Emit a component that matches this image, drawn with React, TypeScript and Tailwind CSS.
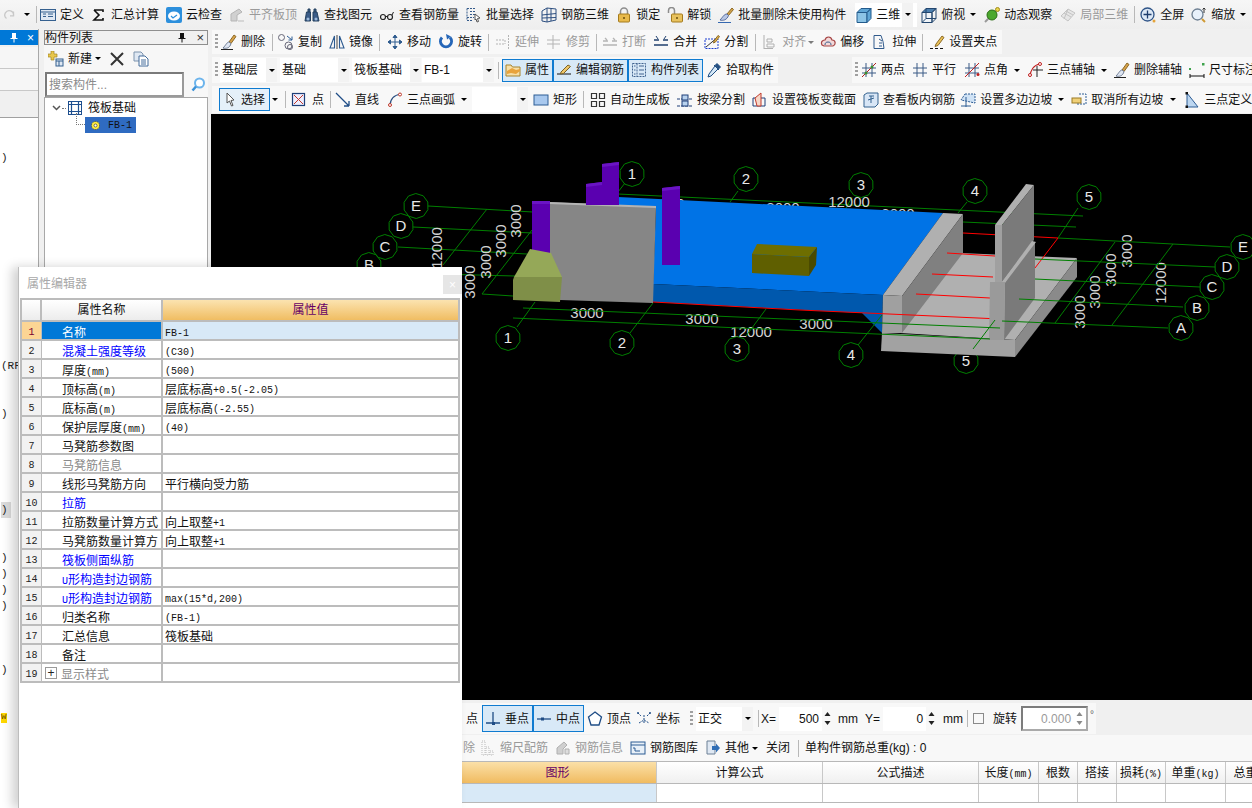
import React from "react";

const Ic = ({ children, size = 16 }: { children: React.ReactNode; size?: number }) => (
  <svg viewBox="0 0 16 16" width={size} height={size} className="shrink-0" fill="none">
    {children}
  </svg>
);

const Caret = ({ className = "" }: { className?: string }) => (
  <span className={`w-0 h-0 shrink-0 border-x-[3px] border-x-transparent border-t-[3px] border-t-black ${className}`} />
);

const Sep = ({ className = "" }: { className?: string }) => (
  <span className={`w-px h-[17px] shrink-0 bg-[#b8b8b8] ${className}`} />
);

const Grip = ({ className = "ml-[3px]" }: { className?: string }) => (
  <span className={`w-[3px] h-[16px] shrink-0 bg-[repeating-linear-gradient(to_bottom,#a0a0a0_0,#a0a0a0_2px,transparent_2px,transparent_4px)] ${className}`} />
);

function Tool({
  icon,
  label,
  muted,
  className = "",
}: {
  icon?: React.ReactNode;
  label: string;
  muted?: boolean;
  className?: string;
}) {
  return (
    <div className={`flex items-center shrink-0 gap-[4px] ${className}`}>
      {icon}
      <span className={muted ? "text-[#9a9a9a] whitespace-nowrap" : "text-[#111] whitespace-nowrap"}>{label}</span>
    </div>
  );
}

// toolbar icons
const icons = {
  define: (
    <Ic>
      <rect x="0.5" y="2.5" width="15" height="11" fill="#dfe8f3" stroke="#35608f" />
      <path d="M0.5 5h15M8 7h5M8 9.5h5M3 7h3M3 9.5h3" stroke="#35608f" />
    </Ic>
  ),
  sum: (
    <Ic>
      <path d="M3 3h9v2M3 3l5 5-5 5h9v-2" stroke="#111" strokeWidth="1.6" />
    </Ic>
  ),
  cloud: (
    <Ic>
      <rect width="16" height="16" rx="2" fill="#2c8fdc" />
      <ellipse cx="8" cy="9" rx="6" ry="4.5" fill="#fff" />
      <path d="M5 9l2 2 4-3" stroke="#2c8fdc" strokeWidth="1.2" />
    </Ic>
  ),
  flush: (
    <Ic>
      <path d="M2 14V7l8-5 3 3-5 3v6z" fill="#d0d0d0" stroke="#b5b5b5" />
      <path d="M9 14h6" stroke="#bbb" />
    </Ic>
  ),
  binoc: (
    <Ic>
      <path d="M1 14l1.500-9h4v9zM9 14V5h4l2 9zM4 5V2h2v3M10 5V2h2v3" fill="#3b5c88" stroke="#25415f" />
      <circle cx="4" cy="12" r="1.500" fill="#9db9da" />
      <circle cx="12" cy="12" r="1.500" fill="#9db9da" />
    </Ic>
  ),
  glasses: (
    <Ic>
      <circle cx="4" cy="10" r="2.500" stroke="#222" strokeWidth="1.200" />
      <circle cx="11" cy="10" r="2.500" stroke="#222" strokeWidth="1.200" />
      <path d="M6.500 9.500h2M13 8l1.500-3" stroke="#222" />
    </Ic>
  ),
  batch: (
    <Ic>
      <path d="M1 1.500h8M1 1.500v12M4 4.500h6M4 7.500h5M1 10.500h7M1 13.500h6" stroke="#355b8b" strokeDasharray="2 1" />
      <path d="M9 7l5 4-2.500 .5 1 3-1.500 .5-1-3L9 13z" fill="#fff" stroke="#555" />
    </Ic>
  ),
  rebar3d: (
    <Ic>
      <path d="M1 4l5-3v14l-5-1zM6 1l9 1v11l-9 2M1 8l14-1.500M10 1.500v12.500M1 11l14-.5" stroke="#2d4f80" />
    </Ic>
  ),
  lock: (
    <Ic>
      <path d="M4.500 7V4.500a3.500 3.500 0 017 0V7" stroke="#8d8d8d" strokeWidth="1.500" />
      <rect x="2.500" y="7" width="11" height="8" rx="1" fill="#e8b94a" stroke="#a47a1c" />
      <circle cx="8" cy="11" r="1" fill="#6b4e0c" />
    </Ic>
  ),
  unlock: (
    <Ic>
      <path d="M1.500 6V3.500a3 3 0 016 0V7" stroke="#8d8d8d" strokeWidth="1.500" />
      <rect x="4.500" y="7" width="11" height="8" rx="1" fill="#e8c25e" stroke="#a47a1c" />
      <circle cx="10" cy="11" r="1" fill="#6b4e0c" />
    </Ic>
  ),
  brush: (
    <Ic>
      <path d="M9 7l5-6 1.500 1.500-5 6z" fill="#d6a44a" stroke="#8c6a28" />
      <path d="M9 7c-3 0-4 3-7 6 3 1 7 0 8.500-4.500z" fill="#b8c6e4" stroke="#5a6fa0" />
      <path d="M0 15.500h13" stroke="#3568b0" />
    </Ic>
  ),
  cube: (
    <Ic>
      <path d="M1 5.500h10v10H1z" fill="#8cc4e6" stroke="#235b8c" />
      <path d="M1 5.500L5 1.500h10L11 5.500zM11 5.500l4-4v10l-4 4z" fill="#5fa6d6" stroke="#235b8c" />
    </Ic>
  ),
  top: (
    <Ic>
      <path d="M1 5.500L5 1.500h10L11 5.500H1z" fill="#4c7fae" stroke="#23466e" />
      <path d="M1 5.500h10v10H1z" fill="#f0f4f8" stroke="#23466e" />
      <path d="M11 5.500l4-4v10l-4 4zM1 15.500l4-4h10M5 1.500v10" stroke="#23466e" />
    </Ic>
  ),
  orbit: (
    <Ic>
      <path d="M1 15L13 3" stroke="#999" strokeWidth="2" />
      <circle cx="8" cy="8" r="5" fill="#4ca82e" stroke="#2a6d14" />
      <circle cx="13.500" cy="2.500" r="2" fill="#e8d44a" stroke="#a08c1c" />
    </Ic>
  ),
  local3d: (
    <Ic>
      <path d="M1 9l7-7 7 4-7 8z" fill="#e6e6e6" stroke="#c4c4c4" />
      <path d="M4 6l7 4M6 4l7 4M8 2L4 12" stroke="#c4c4c4" />
    </Ic>
  ),
  full: (
    <Ic>
      <circle cx="7.500" cy="7.500" r="6.500" fill="#dce8f6" stroke="#2f5487" strokeWidth="1.300" />
      <path d="M7.500 3.500v8M3.500 7.500h8" stroke="#1e3d6e" strokeWidth="1.300" />
      <circle cx="14" cy="14" r="1.500" fill="#e5a43a" />
    </Ic>
  ),
  zoom: (
    <Ic>
      <circle cx="6.500" cy="7.500" r="5.500" fill="#e8f1fb" stroke="#6d7f92" strokeWidth="1.300" />
      <path d="M11 12l3 3" stroke="#d09a34" strokeWidth="2" />
      <path d="M13 1v5M11.500 2.500L13 1l1.500 1.500" stroke="#333" />
    </Ic>
  ),
  del: (
    <Ic>
      <path d="M8 8l5-7 2 1.500-5 7z" fill="#d8a24a" stroke="#8c6a28" />
      <path d="M8 8c-2 0-3 3-6 6 3 1 7 0 8-4.500z" fill="#dfe6f2" stroke="#6f7d95" />
      <path d="M0 15.500h12" stroke="#222" />
    </Ic>
  ),
  copy: (
    <Ic>
      <circle cx="3.500" cy="3.500" r="3" stroke="#667" />
      <circle cx="10.500" cy="11.500" r="3.500" stroke="#667" />
      <circle cx="12" cy="13" r="2.500" stroke="#667" />
      <path d="M9 2l5 4M14 2.500V6h-3.500" stroke="#2d5c94" />
    </Ic>
  ),
  mirror: (
    <Ic>
      <path d="M5.500 2L1 14h4.500zM10.500 2L15 14h-4.500z" stroke="#2e5b90" strokeWidth="1.100" />
      <path d="M8 1v14" stroke="#444" />
    </Ic>
  ),
  move: (
    <Ic>
      <path d="M8 1v14M1 8h14M8 1L6 3.500h4zM8 15l-2-2.500h4zM1 8l2.500-2v4zM15 8l-2.500-2v4z" stroke="#2f5c8f" fill="#2f5c8f" />
    </Ic>
  ),
  rotate: (
    <Ic>
      <path d="M4 3.500a5.500 5.500 0 108 0" stroke="#2566b8" strokeWidth="3" />
      <path d="M8 0l5 2.500-4 3z" fill="#2566b8" />
    </Ic>
  ),
  extend: (
    <Ic>
      <path d="M13.500 1v14M1 6h9M1 10h9M10 6v4" stroke="#b4b4b4" strokeDasharray="2 1" />
    </Ic>
  ),
  trim: (
    <Ic>
      <path d="M7 1v14M1 6h13M1 10h13" stroke="#b4b4b4" />
    </Ic>
  ),
  breakI: (
    <Ic>
      <path d="M1 7h5M10 7h5M1 11h14M3 4l2 2M11 4l2 2" stroke="#b4b4b4" strokeWidth="1.300" />
    </Ic>
  ),
  merge: (
    <Ic>
      <path d="M1 6h5M10 6h5M1 11h14" stroke="#1f3f6e" strokeWidth="1.400" />
      <path d="M3 2l2 3M13 2l-2 3" stroke="#1f3f6e" />
    </Ic>
  ),
  split: (
    <Ic>
      <path d="M1 5h13v9.500H1z" stroke="#1c3ed0" strokeDasharray="2 1" />
      <path d="M2 13L14 3" stroke="#333" />
      <path d="M10 7l4-5.500 1.500 1-4 5.500-2 1z" fill="#e8b74a" stroke="#8c6a28" />
    </Ic>
  ),
  align: (
    <Ic>
      <path d="M2 1v14M2 14.500h9M5 5h5v3H5zM5 10h7v3H5z" stroke="#b0b0b0" />
    </Ic>
  ),
  offset: (
    <Ic>
      <path d="M2 11c-2-4 2-5 3-5 1-4 6-4 7 0 4 0 4 5 1 6H4z" fill="#f3d9d9" stroke="#a64646" strokeWidth="1.200" />
      <path d="M5 11c0-2 1-3 3-3s3 1 3 3" stroke="#355b8b" />
    </Ic>
  ),
  stretch: (
    <Ic>
      <path d="M2 1.500h7l2 6 1 7H2zM7 5l3 2M7 9h3M7 12h3" stroke="#305a8c" />
    </Ic>
  ),
  grip: (
    <Ic>
      <path d="M7 10l6-8 2 1.500-6 8-3 1z" fill="#eac258" stroke="#8c6a28" />
      <path d="M1 14.500h3M6 14.500h3M11 14.500h3" stroke="#111" />
    </Ic>
  ),
  props: (
    <Ic>
      <path d="M1 3h5l1.500 2H15v9H1z" fill="#f6dfa8" stroke="#a8842c" />
      <path d="M2 9l5-3 4 2 4-1v2l-4 3-5-1-4 1z" fill="#e8a33c" />
    </Ic>
  ),
  editRebar: (
    <Ic>
      <path d="M1 12h14" stroke="#333" strokeWidth="1.200" />
      <path d="M5 10l7-7 2.500 1.500-7 7-3 .5z" fill="#eec66a" stroke="#7c6224" />
    </Ic>
  ),
  list: (
    <Ic>
      <path d="M1.500 1.500h13v13h-13zM6 1.500v13" stroke="#40638f" strokeDasharray="2 1" />
      <path d="M8 4h5M8 8h5M8 12h5M3 4h1.500M3 8h1.500M3 12h1.500" stroke="#40638f" />
    </Ic>
  ),
  pick: (
    <Ic>
      <path d="M9 4l3 3-7 7-3 1 1-3z" fill="#d5e8f7" stroke="#1e4d82" />
      <path d="M8 3l5 5M11 1.500l3.500 3.500-2 2-3.500-3.500z" fill="#274f80" stroke="#1e4d82" />
    </Ic>
  ),
  twoPt: (
    <Ic>
      <path d="M5 1v14M11 1v14M1 6h14M1 11h14" stroke="#3a5a86" />
      <path d="M1 15L15 1" stroke="#b02020" />
      <circle cx="11" cy="5" r="1.500" fill="#3d8c2c" />
      <circle cx="5" cy="11" r="1.500" fill="#3d8c2c" />
    </Ic>
  ),
  parallel: (
    <Ic>
      <path d="M5 1v14M11 1v14M1 6h14M1 11h14" stroke="#3a5a86" />
    </Ic>
  ),
  angle: (
    <Ic>
      <path d="M5 1v14M11 1v14M1 6h14M1 11h14" stroke="#3a5a86" />
      <path d="M1 15L15 1" stroke="#c02020" />
      <circle cx="14" cy="12.500" r="1.500" fill="#c02020" />
    </Ic>
  ),
  threePt: (
    <Ic>
      <path d="M3 15C3 8 7 3 13 2" stroke="#c02020" strokeWidth="1.200" />
      <circle cx="3" cy="13" r="1.500" fill="#fff" stroke="#c02020" />
      <circle cx="13" cy="2" r="1.500" fill="#fff" stroke="#c02020" />
      <path d="M6 8h10M10 4v11" stroke="#222" />
    </Ic>
  ),
  dim: (
    <Ic>
      <path d="M1 14h14M1 12v4M15 12v4" stroke="#111" />
      <rect x="0" y="6" width="2" height="2" fill="#3fa34d" />
      <rect x="13" y="1" width="2.500" height="2.500" fill="#3fa34d" />
    </Ic>
  ),
  arrow: (
    <Ic>
      <path d="M4 1l7 7-3 .5 2 5-1.500 .5-2-5L4 11z" fill="#fff" stroke="#555" />
    </Ic>
  ),
  point: (
    <Ic>
      <rect x="1.500" y="1.500" width="12" height="12" fill="#eef" stroke="#1f3f78" strokeWidth="1.200" />
      <path d="M3 3l9 9M12 3l-9 9" stroke="#c0392b" />
    </Ic>
  ),
  line: (
    <Ic>
      <path d="M1 1l13 13M14 14V9M14 14H9" stroke="#1f4d86" strokeWidth="1.300" />
    </Ic>
  ),
  arc: (
    <Ic>
      <path d="M3 14C3 7 7 3 14 2" stroke="#2a4f80" strokeWidth="1.200" />
      <circle cx="3" cy="13" r="1.500" fill="#fff" stroke="#c0392b" />
      <circle cx="13" cy="2.500" r="1.500" fill="#fff" stroke="#c0392b" />
    </Ic>
  ),
  rect: (
    <Ic>
      <rect x="1" y="3" width="14" height="10" fill="#a8c8ee" stroke="#2d5c94" />
    </Ic>
  ),
  auto: (
    <Ic>
      <path d="M1.500 1.500h5v5h-5zM9.500 1.500h5v5h-5zM1.500 9.500h5v5h-5zM9.500 9.500h5v5h-5z" stroke="#333" strokeWidth="1.200" />
    </Ic>
  ),
  beam: (
    <Ic>
      <path d="M0 14h16M0 7h16" stroke="#1f3f78" strokeDasharray="3 1" />
      <rect x="5" y="3" width="6" height="5" fill="#b8d2ee" stroke="#1f3f78" />
      <rect x="5" y="9" width="6" height="5" fill="#b8d2ee" stroke="#1f3f78" />
    </Ic>
  ),
  section: (
    <Ic>
      <path d="M1 6h12v8H1z" stroke="#1f3f78" />
      <path d="M9 1L3 6l2 8h4z" fill="#f6d7c8" stroke="#c0392b" />
    </Ic>
  ),
  inner: (
    <Ic>
      <path d="M1 3l3-2h11v11l-3 3H1z" fill="#d8e6f6" stroke="#34628f" />
      <path d="M6 4h5M8 4v7M5 8l6-2" stroke="#34628f" />
    </Ic>
  ),
  slope: (
    <Ic>
      <path d="M5 2h10v9L1 8z" fill="#cfe2f5" stroke="#2d5c94" strokeDasharray="2 1" />
      <path d="M6 5v10M1 14h10" stroke="#2d5c94" />
    </Ic>
  ),
  cancel: (
    <Ic>
      <path d="M8 2h7v10H6" stroke="#2d5c94" strokeDasharray="2 1" />
      <rect x="1" y="6" width="9" height="5" fill="#f0d078" stroke="#9a7a24" />
    </Ic>
  ),
  threeDef: (
    <Ic>
      <path d="M3 1v14h11z" fill="#bcd6f0" stroke="#2d5c94" />
      <rect x="1.500" y="0" width="2.500" height="2.500" fill="#111" />
      <rect x="1.500" y="13.500" width="2.500" height="2.500" fill="#111" />
    </Ic>
  ),
  foot: (
    <Ic>
      <path d="M8 1v11M1 12h14" stroke="#1f4d86" strokeWidth="1.300" />
      <rect x="7" y="11" width="3" height="3" fill="#1f4d86" />
    </Ic>
  ),
  mid: (
    <Ic>
      <path d="M1 8h14" stroke="#1f4d86" strokeWidth="1.300" />
      <rect x="5" y="6.500" width="3" height="3" fill="#1f4d86" />
    </Ic>
  ),
  vertex: (
    <Ic>
      <path d="M8 1l6.500 5-2.500 8H4L1.500 6z" fill="#fff" stroke="#1f4d86" strokeWidth="1.300" />
    </Ic>
  ),
  coord: (
    <Ic>
      <path d="M8 4v8M3 12l5-3 5 3" stroke="#1f4d86" strokeDasharray="2 1" />
      <path d="M2 2l3 3M11 5l3-3" stroke="#1f4d86" strokeDasharray="2 1" />
      <circle cx="2" cy="2" r="1" fill="#1f4d86" />
      <circle cx="14" cy="2" r="1" fill="#1f4d86" />
    </Ic>
  ),
  scale: (
    <Ic>
      <path d="M2 1h3v14H2zM6 7h3v8H6zM10 11h3v4h-3z" stroke="#bbb" strokeDasharray="1 1" />
    </Ic>
  ),
  info: (
    <Ic>
      <path d="M2 14V8l7-6 3 3-4 4v5z" fill="#cfcfcf" stroke="#b0b0b0" />
      <path d="M10 9h4v5h-4z" fill="#ddd" stroke="#b0b0b0" />
    </Ic>
  ),
  library: (
    <Ic>
      <rect x="1" y="2" width="14" height="12" fill="#e8f0f8" stroke="#2d5c94" />
      <path d="M1 5h14M3 8h2v3h5" stroke="#2d5c94" />
    </Ic>
  ),
  other: (
    <Ic>
      <path d="M2 1h8v13H2z" fill="#dfe8f3" stroke="#6c8096" />
      <path d="M7 6h4V3.500L15 8l-4 4.500V10H7z" fill="#2f6db5" />
    </Ic>
  ),
};

function SideList() {
  const marks: Record<number, React.ReactNode> = {
    2: ")",
    15: "(RF",
    18: ")",
    24: <span className="block w-[10px] bg-[#dcdcdc]">)</span>,
    27: ")",
    28: ")",
    29: ")",
    30: ")",
    34: ")",
    37: <span className="block w-[6px] h-[10px] leading-[9px] bg-[#ffd800] text-[#6a4a00] text-[9px]">w</span>,
  };
  return (
    <div className="flex-1 bg-white overflow-hidden">
      {Array.from({ length: 43 }, (_, i) => (
        <div key={i} className="h-[16px] leading-[16px] pl-px text-[11px] font-['Liberation_Mono',monospace] text-[#222] whitespace-nowrap flex items-center">
          {marks[i]}
        </div>
      ))}
    </div>
  );
}

function Sidebar() {
  return (
    <aside className="w-[39px] flex flex-col shrink-0 border-r border-[#a8a8a8]">
      <div className="h-px" />
      <div className="h-[15px] bg-[#0078d7] flex items-center justify-end gap-[8px] pr-[3px] text-white">
        <svg width="10" height="11" viewBox="0 0 10 11">
          <path d="M3 1h4v5h1.500v1H5.500v3.500h-1V7H1.500V6H3z" fill="#fff" />
        </svg>
        <span className="text-[12px] leading-none mr-px">×</span>
      </div>
      <div className="h-[2px]" />
      <div className="h-[22px] bg-[#f6f6f6] border-b border-[#c8c8c8]" />
      <div className="h-[22px] bg-[#f6f6f6] border-b border-[#c8c8c8]" />
      <div className="h-[27px] bg-[#f0f0f0] border-b border-[#a0a0a0]" />
      <SideList />
    </aside>
  );
}

function ComponentPanel() {
  return (
    <aside className="w-[164px] ml-[5px] flex flex-col shrink-0">
      <div className="mt-px h-[15px] border border-[#8e8e8e] bg-[#f0f0f0] flex items-center text-[12px] leading-none text-[#111]">
        <span className="flex-1">构件列表</span>
        <svg width="10" height="11" viewBox="0 0 10 11" className="mr-[9px]">
          <path d="M3 1h4v5h1.500v1H5.500v3.500h-1V7H1.500V6H3z" fill="#111" />
        </svg>
        <span className="text-[13px] mr-[3px] text-[#333]">×</span>
      </div>
      <div className="h-[27px] flex items-center pl-[4px] bg-[#f7f7f7]">
        <Tool
          icon={
            <Ic>
              <path d="M0 3h3V0h3v3h3v3H6v3H3V6H0z" fill="#e8c64c" stroke="#a08524" strokeWidth=".7" />
              <rect x="8" y="8" width="7" height="7" fill="#dfe8f3" stroke="#35608f" />
              <path d="M8 10h7M11 10v5" stroke="#35608f" />
            </Ic>
          }
          label="新建"
        />
        <Caret className="ml-[3px]" />
        <svg width="14" height="14" viewBox="0 0 14 14" className="ml-[9px]">
          <path d="M1 1l12 12M13 1L1 13" stroke="#333" strokeWidth="2" />
        </svg>
        <span className="ml-[9px]">
          <Ic>
            <path d="M1 1h7l2 2v7H1z" fill="#dfe8f3" stroke="#7c93ad" />
            <path d="M6 5h6l3 3v7H6z" fill="#fff" stroke="#456d9b" />
            <path d="M8 9h5M8 11h5M8 13h5" stroke="#456d9b" />
          </Ic>
        </span>
      </div>
      <div className="h-[25px] flex items-center bg-[#f7f7f7]">
        <div className="w-[139px] ml-px h-[25px] border-2 border-[#7a7a7a] bg-white text-[#8a8a8a] text-[12px] flex items-center pl-[2px] border-b-[#9a9a9a] border-r-[#9a9a9a]">
          搜索构件...
        </div>
        <div className="ml-[4px] w-[20px] flex justify-center">
          <svg width="15" height="15" viewBox="0 0 15 15">
            <circle cx="8.500" cy="6" r="4.500" fill="#fff" stroke="#6cb4ec" strokeWidth="2" />
            <path d="M5 9.500L1.500 13.500" stroke="#3c92d8" strokeWidth="2.500" />
          </svg>
        </div>
      </div>
      <div className="flex-1 bg-white border border-[#a8a8a8] relative text-[12px] text-[#111]">
        <div className="flex items-center h-[18px] mt-[1px] pl-[7px]">
          <svg width="9" height="6" viewBox="0 0 9 6">
            <path d="M1 1l3.500 3.500L8 1" stroke="#555" strokeWidth="1.500" fill="none" />
          </svg>
          <span className="w-[4px] ml-[1px] border-t border-dotted border-[#777]" />
          <svg width="14" height="14" viewBox="0 0 14 14" className="ml-[2px]">
            <rect x="0.500" y="0.500" width="13" height="13" fill="#fff" stroke="#1e4f8f" />
            <path d="M3.500 1v12M10.500 1v12M1 3.500h12M1 10.500h12" stroke="#1e4f8f" strokeWidth="1.200" />
          </svg>
          <span className="ml-[6px]">筏板基础</span>
        </div>
        <div className="flex items-center h-[16px] pl-[31px]">
          <span className="w-[9px] h-[12px] -mt-[12px] border-l border-b border-dotted border-[#777]" />
          <div className="w-[51px] h-[16px] bg-[#2f6bc1] flex items-center pl-[5px]">
            <svg width="11" height="11" viewBox="0 0 11 11">
              <circle cx="5.500" cy="5.500" r="4" fill="#ffee40" stroke="#222" strokeWidth=".6" strokeDasharray="1.200 .6" />
              <circle cx="5.500" cy="5.500" r="1.500" fill="#fff" stroke="#222" strokeWidth=".6" />
            </svg>
            <span className="ml-[7px] text-[10px] font-['Liberation_Mono',monospace] text-[#111]">FB-1</span>
          </div>
        </div>
      </div>
    </aside>
  );
}

function TopBar() {
  return (
    <header className="h-[29px] shrink-0 flex items-center bg-[linear-gradient(#f6f6f6,#eeeeee)] text-[12px] pl-[3px]">
      <Ic size={14}>
        <path d="M4 12a5 5 0 118 -3M12 4v5H8" stroke="#c8c8c8" strokeWidth="1.500" />
      </Ic>
      <Caret className="ml-[7px]" />
      <Sep className="ml-[6px]" />
      <Tool icon={icons.define} label="定义" className="ml-[3px]" />
      <Tool icon={icons.sum} label="汇总计算" className="ml-[7px]" />
      <Tool icon={icons.cloud} label="云检查" className="ml-[7px]" />
      <Tool icon={icons.flush} label="平齐板顶" muted className="ml-[7px]" />
      <Tool icon={icons.binoc} label="查找图元" className="ml-[7px]" />
      <Tool icon={icons.glasses} label="查看钢筋量" className="ml-[7px]" />
      <Tool icon={icons.batch} label="批量选择" className="ml-[7px]" />
      <Tool icon={icons.rebar3d} label="钢筋三维" className="ml-[7px]" />
      <Tool icon={icons.lock} label="锁定" className="ml-[7px]" />
      <Tool icon={icons.unlock} label="解锁" className="ml-[7px]" />
      <Tool icon={icons.brush} label="批量删除未使用构件" className="ml-[7px]" />
      <div className="ml-[9px] h-[24px] w-[62px] bg-white flex items-center pl-px shrink-0">
        <Tool icon={icons.cube} label="三维" />
        <span className="ml-[2px] w-[11px] h-[24px] bg-[#f2f2f2] flex items-center justify-center">
          <Caret />
        </span>
      </div>
      <Tool icon={icons.top} label="俯视" className="ml-[4px]" />
      <Caret className="ml-[5px]" />
      <Tool icon={icons.orbit} label="动态观察" className="ml-[8px]" />
      <Tool icon={icons.local3d} label="局部三维" muted className="ml-[8px]" />
      <Sep className="ml-[6px]" />
      <Tool icon={icons.full} label="全屏" className="ml-[5px]" />
      <Tool icon={icons.zoom} label="缩放" className="ml-[7px]" />
      <Caret className="ml-[5px]" />
    </header>
  );
}

function Select({ label, className }: { label: string; className: string }) {
  return (
    <div className={`h-[24px] bg-white flex items-center justify-between pl-[2px] shrink-0 ${className}`}>
      <span className="text-[#111] whitespace-nowrap">{label}</span>
      <span className="w-[11px] h-[24px] bg-[#f3f3f3] flex items-center justify-center">
        <Caret />
      </span>
    </div>
  );
}

function ToggleButton({ icon, label, className = "" }: { icon: React.ReactNode; label: string; className?: string }) {
  return (
    <div className={`h-[23px] px-[2px] flex items-center gap-[4px] border border-[#0f7bd0] bg-[#d8e9f7] shrink-0 ${className}`}>
      {icon}
      <span className="text-[#111] whitespace-nowrap">{label}</span>
    </div>
  );
}

function RibbonA() {
  return (
    <div className="mt-px ml-px h-[24px] w-[790px] bg-[#f8f8f8] flex items-center">
      <Grip />
      <Tool icon={icons.del} label="删除" className="ml-[3px]" />
      <Sep className="ml-[7px]" />
      <Tool icon={icons.copy} label="复制" className="ml-[5px]" />
      <Tool icon={icons.mirror} label="镜像" className="ml-[7px]" />
      <Sep className="ml-[6px]" />
      <Tool icon={icons.move} label="移动" className="ml-[7px]" />
      <Tool icon={icons.rotate} label="旋转" className="ml-[7px]" />
      <Sep className="ml-[6px]" />
      <Tool icon={icons.extend} label="延伸" muted className="ml-[6px]" />
      <Tool icon={icons.trim} label="修剪" muted className="ml-[7px]" />
      <Sep className="ml-[6px]" />
      <Tool icon={icons.breakI} label="打断" muted className="ml-[5px]" />
      <Tool icon={icons.merge} label="合并" className="ml-[7px]" />
      <Tool icon={icons.split} label="分割" className="ml-[7px]" />
      <Sep className="ml-[7px]" />
      <Tool icon={icons.align} label="对齐" muted className="ml-[6px]" />
      <Caret className="ml-[2px] opacity-50" />
      <Tool icon={icons.offset} label="偏移" className="ml-[6px]" />
      <Tool icon={icons.stretch} label="拉伸" className="ml-[8px]" />
      <Sep className="ml-[6px]" />
      <Tool icon={icons.grip} label="设置夹点" className="ml-[6px]" />
    </div>
  );
}

function RibbonB() {
  return (
    <div className="mt-[3px] ml-px h-[26px] flex items-center">
      <div className="w-[566px] h-[26px] bg-[#f8f8f8] flex items-center shrink-0">
        <Grip />
        <Select label="基础层" className="w-[57px] ml-[2px]" />
        <Select label="基础" className="w-[69px] ml-[3px]" />
        <Select label="筏板基础" className="w-[69px] ml-[3px]" />
        <Select label="FB-1" className="w-[72px] ml-px" />
        <Sep className="ml-[4px]" />
        <ToggleButton icon={icons.props} label="属性" className="w-[51px] ml-[3px]" />
        <ToggleButton icon={icons.editRebar} label="编辑钢筋" className="w-[75px]" />
        <ToggleButton icon={icons.list} label="构件列表" className="w-[75px]" />
        <Tool icon={icons.pick} label="拾取构件" className="ml-[3px]" />
      </div>
      <div className="ml-[74px] flex-1 h-[26px] bg-[#f8f8f8] flex items-center overflow-hidden">
        <Grip />
        <Tool icon={icons.twoPt} label="两点" className="ml-[3px]" />
        <Tool icon={icons.parallel} label="平行" className="ml-[7px]" />
        <Tool icon={icons.angle} label="点角" className="ml-[8px]" />
        <Caret className="ml-[6px]" />
        <Tool icon={icons.threePt} label="三点辅轴" className="ml-[7px]" />
        <Caret className="ml-[6px]" />
        <Tool icon={icons.del} label="删除辅轴" className="ml-[7px]" />
        <Tool icon={icons.dim} label="尺寸标注" className="ml-[7px]" />
      </div>
    </div>
  );
}

function RibbonC() {
  return (
    <div className="mt-[3px] ml-px h-[27px] bg-[#f8f8f8] flex items-center overflow-hidden">
      <div className="w-[51px] h-[23px] ml-[7px] flex items-center gap-[2px] pl-[3px] border border-[#0f7bd0] bg-[#e5f0f9] shrink-0">
        {icons.arrow}
        <span className="text-[#111]">选择</span>
      </div>
      <Caret className="ml-[2px]" />
      <Sep className="ml-[7px]" />
      <Tool icon={icons.point} label="点" className="ml-[5px] gap-[5px]" />
      <Sep className="ml-[6px]" />
      <Tool icon={icons.line} label="直线" className="ml-[4px]" />
      <Tool icon={icons.arc} label="三点画弧" className="ml-[8px]" />
      <Caret className="ml-[6px]" />
      <div className="ml-[5px] w-[56px] h-[25px] bg-white flex items-center justify-end shrink-0">
        <span className="w-[11px] h-[25px] bg-[#f3f3f3] flex items-center justify-center">
          <Caret />
        </span>
      </div>
      <Tool icon={icons.rect} label="矩形" className="ml-[5px]" />
      <Sep className="ml-[6px]" />
      <Tool icon={icons.auto} label="自动生成板" className="ml-[6px]" />
      <Tool icon={icons.beam} label="按梁分割" className="ml-[7px]" />
      <Tool icon={icons.section} label="设置筏板变截面" className="ml-[7px]" />
      <Tool icon={icons.inner} label="查看板内钢筋" className="ml-[7px]" />
      <Tool icon={icons.slope} label="设置多边边坡" className="ml-[5px]" />
      <Caret className="ml-[6px]" />
      <Tool icon={icons.cancel} label="取消所有边坡" className="ml-[7px]" />
      <Caret className="ml-[7px]" />
      <Tool icon={icons.threeDef} label="三点定义斜" className="ml-[8px]" />
    </div>
  );
}

// model view, drawn in page coordinates
type Seg = [number, number, number, number];

const backLines: Seg[] = [
  [428, 206, 533, 212],
  [413, 227, 532, 233],
  [398, 247, 527, 254],
  [360, 272, 515, 276],
  [482, 294, 513, 296],
  [487, 209, 443, 265],
  [532, 230, 482, 294],
  [618, 194, 1083, 216],
  [963, 222, 1076, 227],
  [625, 183, 618, 192],
  [738, 191, 730, 202],
  [852, 197, 846, 208],
  [967, 202, 958, 213],
  [1078, 208, 1058, 238],
];

const frontLines: Seg[] = [
  [523, 308, 1000, 328],
  [513, 318, 990, 339],
  [535, 302, 517, 327],
  [653, 303, 630, 333],
  [766, 309, 746, 336],
  [882, 315, 858, 345],
  [995, 320, 973, 349],
  [1058, 238, 1230, 247],
  [1035, 259, 1215, 267],
  [1035, 279, 1200, 287],
  [1019, 299, 1183, 307],
  [1002, 321, 1168, 328],
  [1115, 242, 1055, 323],
  [1173, 244, 1112, 325],
];

const redLines: Seg[] = [
  [963, 233, 1058, 238],
  [1058, 238, 1035, 268],
  [947, 253, 995, 256],
  [932, 274, 993, 277],
  [916, 294, 990, 298],
  [800, 310, 1000, 319],
  [653, 302, 800, 310],
];

const hiddenBubbles: [number, number, string][] = [[966, 361, "5"]];

const bubbles: [number, number, string][] = [
  [632, 174, "1"], [746, 179, "2"], [861, 185, "3"], [975, 191, "4"], [1089, 197, "5"],
  [508, 338, "1"], [622, 343, "2"], [737, 349, "3"], [851, 355, "4"],
  [416, 206, "E"], [401, 226, "D"], [385, 247, "C"], [369, 265, "B"],
  [1243, 247, "E"], [1227, 267, "D"], [1212, 287, "C"], [1197, 308, "B"], [1181, 328, "A"],
];

const flatDims: [number, number, string][] = [
  [587, 313, "3000"], [702, 319, "3000"], [816, 324, "3000"], [751, 332, "12000"], [849, 202, "12000"],
];

const sideDims: [number, number, string][] = [
  [437, 248, "12000"], [470, 282, "3000"], [486, 262, "3000"], [501, 241, "3000"], [516, 221, "3000"],
  [1161, 283, "12000"], [1080, 312, "3000"], [1095, 292, "3000"], [1111, 270, "3000"], [1127, 251, "3000"],
];

const solids: [string, string][] = [
  ["618,197 943,213 883,295 653,284 656,207 618,205", "#0073e6"],
  ["653,284 883,295 882,333 862,313 653,302", "#0058ad"],
  ["549,202 656,207 653,303 560,300 549,280", "#868686"],
  ["549,202 656,206 656,208 549,204", "#b4b4b4"],
  ["532,201 550,201 550,253 532,253", "#5a00b0"],
  ["532,201 534,201 550,201 550,204 532,204", "#6a14c4"],
  ["586,184 602,182 602,205 586,205", "#5a00b0"],
  ["586,184 602,182 602,185 586,187", "#6a14c4"],
  ["602,164 619,162 619,205 602,205", "#5a00b0"],
  ["602,164 619,162 619,165 602,167", "#6a14c4"],
  ["662,188 680,186 680,265 662,265", "#5a00b0"],
  ["662,188 680,186 680,189 662,191", "#6a14c4"],
  ["530,249 551,253 562,277 514,277", "#95a858"],
  ["513,280 514,277 562,277 560,302 513,300", "#7f8f48"],
  ["752,254 757,244 817,247 809,257", "#6e6e00"],
  ["752,254 809,257 809,276 752,273", "#5f5f00"],
  ["809,257 817,247 816,265 809,276", "#4a4a00"],
  ["960,253 1077,258 1015,340 900,333", "#b0b0b0"],
  ["1077,258 1077,277 1015,357 1015,340", "#8a8a8a"],
  ["882,333 1015,340 1015,357 881,351", "#a2a2a2"],
  ["943,213 963,214 902,296 883,295", "#b0b0b0"],
  ["963,214 963,253 902,333 902,296", "#808080"],
  ["883,295 902,296 902,333 882,333", "#a0a0a0"],
];

const wallSolids: [string, string][] = [
  ["995,225 1026,184 1034,185 1002,225", "#b0b0b0"],
  ["1002,225 1034,185 1034,240 1002,282", "#7a7a7a"],
  ["995,225 1002,225 1002,282 995,282", "#a0a0a0"],
  ["1005,282 1035,242 1035,298 1004,340", "#7a7a7a"],
  ["1002,282 1032,241 1036,242 1005,283", "#b0b0b0"],
  ["990,282 1005,282 1004,340 989,340", "#9a9a9a"],
];

const Segs = ({ list, color }: { list: Seg[]; color: string }) => (
  <>
    {list.map(([x1, y1, x2, y2], i) => (
      <line key={i} x1={x1} y1={y1} x2={x2} y2={y2} stroke={color} strokeWidth="1" />
    ))}
  </>
);

const ring = (x: number, y: number) =>
  Array.from({ length: 10 }, (_, i) => {
    const a = (i * Math.PI) / 5 + 0.3;
    return `${(x + 12.5 * Math.cos(a)).toFixed(1)},${(y + 12.5 * Math.sin(a)).toFixed(1)}`;
  }).join(" ");

const Bubbles = ({ list }: { list: [number, number, string][] }) => (
  <>
    {list.map(([x, y, t], i) => (
      <g key={i}>
        <polygon points={ring(x, y)} fill="none" stroke="#007f00" />
        <text x={x} y={y + 5} fill="#e8e8e8" fontSize="15" textAnchor="middle">
          {t}
        </text>
      </g>
    ))}
  </>
);

function ModelView() {
  return (
    <div className="h-[586px] mt-px bg-black shrink-0 overflow-hidden">
      <svg width="1041" height="586" viewBox="211 114 1041 586" className="block font-['Liberation_Sans',sans-serif]">
        <Segs list={backLines} color="#007f00" />
        <Bubbles list={hiddenBubbles} />
        <g fill="#d4d4d4" fontSize="15" textAnchor="middle">
          <text x="668" y="209">3000</text>
          <text x="783" y="213">3000</text>
          <text x="898" y="219">3000</text>
          {flatDims.map(([x, y, t], i) => (
            <text key={i} x={x} y={y + 5}>
              {t}
            </text>
          ))}
          {sideDims.map(([x, y, t], i) => (
            <text key={i} x={x + 5} y={y} transform={`rotate(-90 ${x + 5} ${y})`}>
              {t}
            </text>
          ))}
        </g>
        {solids.map(([points, fill], i) => (
          <polygon key={i} points={points} fill={fill} />
        ))}
        <Segs list={redLines} color="#ff0000" />
        {wallSolids.map(([points, fill], i) => (
          <polygon key={i} points={points} fill={fill} />
        ))}
        <Segs list={frontLines} color="#007f00" />
        <Bubbles list={bubbles} />
      </svg>
    </div>
  );
}

function SnapBar() {
  return (
    <div className="h-[35px] shrink-0 bg-[#f0f0f0] pl-[251px] pt-[3px]">
      <div className="w-[634px] h-[31px] bg-[#f8f8f8] flex items-center">
        <span className="w-[15px] ml-px text-[#111] overflow-hidden whitespace-nowrap text-right">点</span>
        <ToggleButton icon={icons.foot} label="垂点" className="w-[51px] h-[27px] ml-[4px]" />
        <ToggleButton icon={icons.mid} label="中点" className="w-[51px] h-[27px]" />
        <Tool icon={icons.vertex} label="顶点" className="ml-[3px]" />
        <Tool icon={icons.coord} label="坐标" className="ml-[5px]" />
        <Grip className="ml-[10px]" />
        <Select label="正交" className="w-[57px] ml-[3px]" />
        <Sep className="ml-[5px]" />
        <span className="ml-[2px] text-[#111]">X=</span>
        <Spin value="500" className="ml-[3px] w-[56px]" />
        <span className="ml-[3px] text-[#111]">mm</span>
        <span className="ml-[7px] text-[#111]">Y=</span>
        <Spin value="0" className="ml-[3px] w-[56px]" />
        <span className="ml-[4px] text-[#111]">mm</span>
        <Sep className="ml-[4px]" />
        <span className="ml-[5px] w-[11px] h-[11px] border border-[#8a8a8a] bg-[#f8f8f8] shrink-0" />
        <span className="ml-[9px] text-[#111]">旋转</span>
        <div className="ml-[4px] w-[67px] h-[25px] border-2 border-[#7c7c7c] bg-white flex items-center justify-end shrink-0 text-[#9a9a9a] border-b-[#aaa] border-r-[#aaa]">
          <span className="mr-[4px]">0.000</span>
          <SpinArrows muted />
        </div>
        <span className="ml-[2px] -mt-[8px] text-[#666] text-[10px]">°</span>
      </div>
    </div>
  );
}

const SpinArrows = ({ muted }: { muted?: boolean }) => (
  <svg width="9" height="17" viewBox="0 0 9 17" className="mr-[2px] shrink-0">
    <path d="M4.500 2l3 4h-6zM4.500 15l-3-4h6z" fill={muted ? "#8a8a8a" : "#222"} />
  </svg>
);

function Spin({ value, className }: { value: string; className: string }) {
  return (
    <div className={`h-[24px] flex items-center shrink-0 bg-white ${className}`}>
      <span className="flex-1 text-right pr-[3px] text-[#111]">{value}</span>
      <span className="bg-[#f8f8f8] h-[24px] w-[13px] flex items-center justify-center">
        <SpinArrows />
      </span>
    </div>
  );
}

function RebarBar() {
  return (
    <div className="h-[26px] shrink-0 bg-[#f8f8f8] pl-[251px] flex items-center overflow-hidden">
      <span className="ml-px text-[#9a9a9a] whitespace-nowrap">除</span>
      <Tool icon={icons.scale} label="缩尺配筋" muted className="ml-[5px]" />
      <Tool icon={icons.info} label="钢筋信息" muted className="ml-[7px]" />
      <Tool icon={icons.library} label="钢筋图库" className="ml-[7px]" />
      <Tool icon={icons.other} label="其他" className="ml-[7px]" />
      <Caret className="ml-[3px]" />
      <span className="ml-[8px] text-[#111]">关闭</span>
      <Sep className="ml-[8px]" />
      <span className="ml-[6px] text-[#111] whitespace-nowrap">单构件钢筋总重(kg) : 0</span>
    </div>
  );
}

const rebarCols = [
  { label: "计算公式", w: "w-[166px]" },
  { label: "公式描述", w: "w-[156px]" },
  { label: "长度(mm)", w: "w-[60px]" },
  { label: "根数", w: "w-[39px]" },
  { label: "搭接", w: "w-[39px]" },
  { label: "损耗(%)", w: "w-[49px]" },
  { label: "单重(kg)", w: "w-[60px]" },
  { label: "总重", w: "w-[40px]" },
];

function RebarTable() {
  return (
    <div className="flex-1 bg-white pl-[251px] overflow-hidden">
      <div className="h-[21px] flex border-y border-[#b8b8b8] bg-[linear-gradient(#ffffff,#f0f0f0)] box-content">
        <div className="w-[195px] shrink-0 flex items-center justify-center bg-[linear-gradient(#fbe0a8,#f0bb60)] text-[#660066] border-r border-[#c8c8c8] pr-[3px]">
          图形
        </div>
        {rebarCols.map((c) => (
          <div key={c.label} className={`${c.w} shrink-0 flex items-center justify-center text-[#111] border-r border-[#c8c8c8] whitespace-nowrap overflow-hidden`}>
            <span>
              <Mixed text={c.label} />
            </span>
          </div>
        ))}
      </div>
      <div className="h-[19px] flex border-b border-[#b8b8b8]">
        <div className="w-[195px] shrink-0 bg-[#d8e9f7] border-r border-[#c8c8c8]" />
        {rebarCols.map((c) => (
          <div key={c.label} className={`${c.w} shrink-0 border-r border-[#c8c8c8]`} />
        ))}
      </div>
    </div>
  );
}

// half-width characters in the grid are narrower than the CJK ones
function Mixed({ text }: { text: string }) {
  return (
    <>
      {text.split(/([\x00-\x7f]+)/).map((part, i) =>
        i % 2 ? (
          <span key={i} className="font-['Liberation_Mono',monospace] text-[10px]">
            {part}
          </span>
        ) : (
          part
        )
      )}
    </>
  );
}

const rows: { name: string; value?: string; tone?: "blue" | "gray"; plus?: boolean }[] = [
  { name: "名称", value: "FB-1" },
  { name: "混凝土强度等级", value: "(C30)", tone: "blue" },
  { name: "厚度(mm)", value: "(500)" },
  { name: "顶标高(m)", value: "层底标高+0.5(-2.05)" },
  { name: "底标高(m)", value: "层底标高(-2.55)" },
  { name: "保护层厚度(mm)", value: "(40)" },
  { name: "马凳筋参数图" },
  { name: "马凳筋信息", tone: "gray" },
  { name: "线形马凳筋方向", value: "平行横向受力筋" },
  { name: "拉筋", tone: "blue" },
  { name: "拉筋数量计算方式", value: "向上取整+1" },
  { name: "马凳筋数量计算方", value: "向上取整+1" },
  { name: "筏板侧面纵筋", tone: "blue" },
  { name: "U形构造封边钢筋", tone: "blue" },
  { name: "U形构造封边钢筋", value: "max(15*d,200)", tone: "blue" },
  { name: "归类名称", value: "(FB-1)" },
  { name: "汇总信息", value: "筏板基础" },
  { name: "备注" },
  { name: "显示样式", tone: "gray", plus: true },
];

function PropertyDialog() {
  return (
    <div className="absolute left-[18px] top-[267px] w-[444px] h-[541px] bg-white border-l border-[#bdbdbd] shadow-[-6px_0_10px_rgba(0,0,0,0.18)] text-[12px]">
      <div className="h-[31px] flex items-start justify-between">
        <span className="ml-[8px] mt-[8px] text-[#a8a8a8]">属性编辑器</span>
        <span className="mt-[8px] w-[19px] h-[19px] bg-[#e6e6e6] text-white flex items-center justify-center text-[12px] leading-none">×</span>
      </div>
      <div className="ml-px mr-[2px] border-2 border-[#bcbcbc] border-b-0 grid grid-cols-[20px_121px_1fr] bg-[#bcbcbc]">
        <div className="h-[22px] bg-[linear-gradient(#ffffff,#ececec)] border-b-2 border-r-2 border-[#bcbcbc]" />
        <div className="h-[22px] bg-[linear-gradient(#ffffff,#ececec)] border-b-2 border-r-2 border-[#bcbcbc] flex items-center justify-center text-[#111]">
          属性名称
        </div>
        <div className="h-[22px] bg-[linear-gradient(#fbe3b0,#f0bd62)] border-b-2 border-[#bcbcbc] flex items-center justify-center text-[#660066]">
          属性值
        </div>
        {rows.map((r, i) => {
          const selected = i === 0;
          const tone = selected
            ? "text-white"
            : r.tone === "blue"
              ? "text-[#0000ff]"
              : r.tone === "gray"
                ? "text-[#8a8a8a]"
                : "text-[#111]";
          return (
            <React.Fragment key={i}>
              <div className={`h-[19px] pt-[4px] border-b-2 border-r border-[#bcbcbc] flex items-center justify-center font-['Liberation_Mono',monospace] text-[10px] ${selected ? "bg-[#fcd594] text-[#7a0030]" : "bg-[#f2f2f2] text-[#222]"}`}>
                {i + 1}
              </div>
              <div className={`h-[19px] pt-[5px] border-b-2 border-r-2 border-[#bcbcbc] flex items-center whitespace-nowrap overflow-hidden ${selected ? "bg-[#0078d7]" : "bg-white"} ${tone}`}>
                {r.plus ? (
                  <span className="ml-[3px] mr-[4px] -mt-[4px] w-[12px] h-[12px] border border-[#9a9a9a] flex items-center justify-center text-[#222] text-[12px] leading-none">
                    +
                  </span>
                ) : (
                  <span className="w-[20px] shrink-0" />
                )}
                <span>
                  <Mixed text={r.name} />
                </span>
              </div>
              <div className={`h-[19px] pt-[5px] border-b-2 border-[#bcbcbc] flex items-center pl-[2px] text-[#111] whitespace-nowrap ${selected ? "bg-[#d8e9f7]" : "bg-white"}`}>
                {r.value && <Mixed text={r.value} />}
              </div>
            </React.Fragment>
          );
        })}
      </div>
    </div>
  );
}

export default function App() {
  return (
    <div className="relative w-[1252px] h-[808px] overflow-hidden bg-[#f0f0f0] flex flex-col text-[12px] font-['Liberation_Sans','Noto_Sans_CJK_SC',sans-serif]">
      <TopBar />
      <div className="flex flex-1 min-h-0">
        <Sidebar />
        <ComponentPanel />
        <main className="ml-[3px] flex-1 min-w-0 flex flex-col">
          <RibbonA />
          <RibbonB />
          <RibbonC />
          <ModelView />
          <SnapBar />
          <RebarBar />
          <RebarTable />
        </main>
      </div>
      <PropertyDialog />
    </div>
  );
}
